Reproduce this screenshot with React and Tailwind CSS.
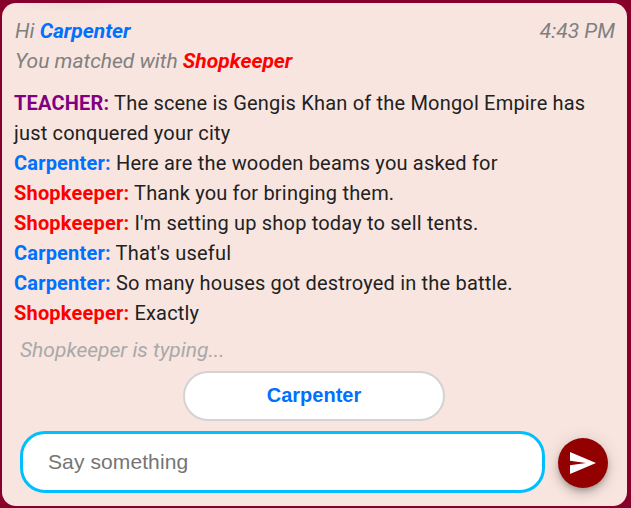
const BLUE = 'text-[#0070ff]';
const RED = 'text-[#ff0000]';
const PURPLE = 'text-[#800080]';

const messages = [
  { who: 'TEACHER', color: PURPLE, text: 'The scene is Gengis Khan of the Mongol Empire has just conquered your city' },
  { who: 'Carpenter', color: BLUE, text: 'Here are the wooden beams you asked for' },
  { who: 'Shopkeeper', color: RED, text: 'Thank you for bringing them.' },
  { who: 'Shopkeeper', color: RED, text: "I'm setting up shop today to sell tents." },
  { who: 'Carpenter', color: BLUE, text: "That's useful" },
  { who: 'Carpenter', color: BLUE, text: 'So many houses got destroyed in the battle.' },
  { who: 'Shopkeeper', color: RED, text: 'Exactly' },
];

export default function App() {
  return (
    <div className="h-[508px] w-[631px] overflow-hidden bg-[#87002b] pl-[2px] pr-1 pt-[3px] font-['Roboto',sans-serif] text-[21px] leading-[30px]">
      <main className="flex h-[503px] flex-col overflow-hidden rounded-[14px] bg-[#f8e5df] bg-[radial-gradient(60px_10px_at_66px_0px,rgba(0,0,0,0.045),transparent)] pt-[13px]">
        <header className="flex justify-between pl-[13px] pr-3 italic text-[#808080]">
          <div>
            <p>Hi <b className={BLUE}>Carpenter</b></p>
            <p>You matched with <b className={RED}>Shopkeeper</b></p>
          </div>
          <time>4:43 PM</time>
        </header>

        <section className="mt-3 h-[240px] pl-3 pr-[30px] text-[20px] tracking-[0.19px] text-[#212121]">
          {messages.map((m, i) => (
            <p key={i}>
              <span className={'font-bold ' + m.color}>{m.who}:</span> {m.text}
            </p>
          ))}
        </section>

        <p className="mt-[7px] pl-[18px] italic text-[#a9a9a9]">Shopkeeper is typing...</p>

        <button className={"ml-[181px] mt-[6px] h-[50px] w-[262px] shrink-0 rounded-[25px] border-2 border-[#d3d3d3] bg-white pb-[2px] font-['Liberation_Sans',sans-serif] text-[20px] font-bold " + BLUE}>
          Carpenter
        </button>

        <form className="mt-[10px] flex items-center gap-[13px] pl-[18px]">
          <input
            placeholder="Say something"
            className="h-[62px] w-[525px] rounded-[25px] border-[3px] border-[#00bfff] bg-white px-[25px] font-['Liberation_Sans',sans-serif] text-[21px] tracking-[0.1px] outline-none placeholder:text-[#757575]"
          />
          <button
            type="button"
            aria-label="Send"
            className="mt-[2px] flex size-[50px] items-center justify-center rounded-full bg-[#920000] shadow-[0_3px_5px_-1px_rgba(0,0,0,0.2),0_6px_10px_0_rgba(0,0,0,0.14),0_1px_18px_0_rgba(0,0,0,0.12)]"
          >
            <svg viewBox="0 0 26 22" className="h-[22px] w-[26px]" fill="white">
              <path d="M0 0L26 11 0 22V13.3L16 11 0 8.7z" />
            </svg>
          </button>
        </form>
      </main>
    </div>
  );
}
